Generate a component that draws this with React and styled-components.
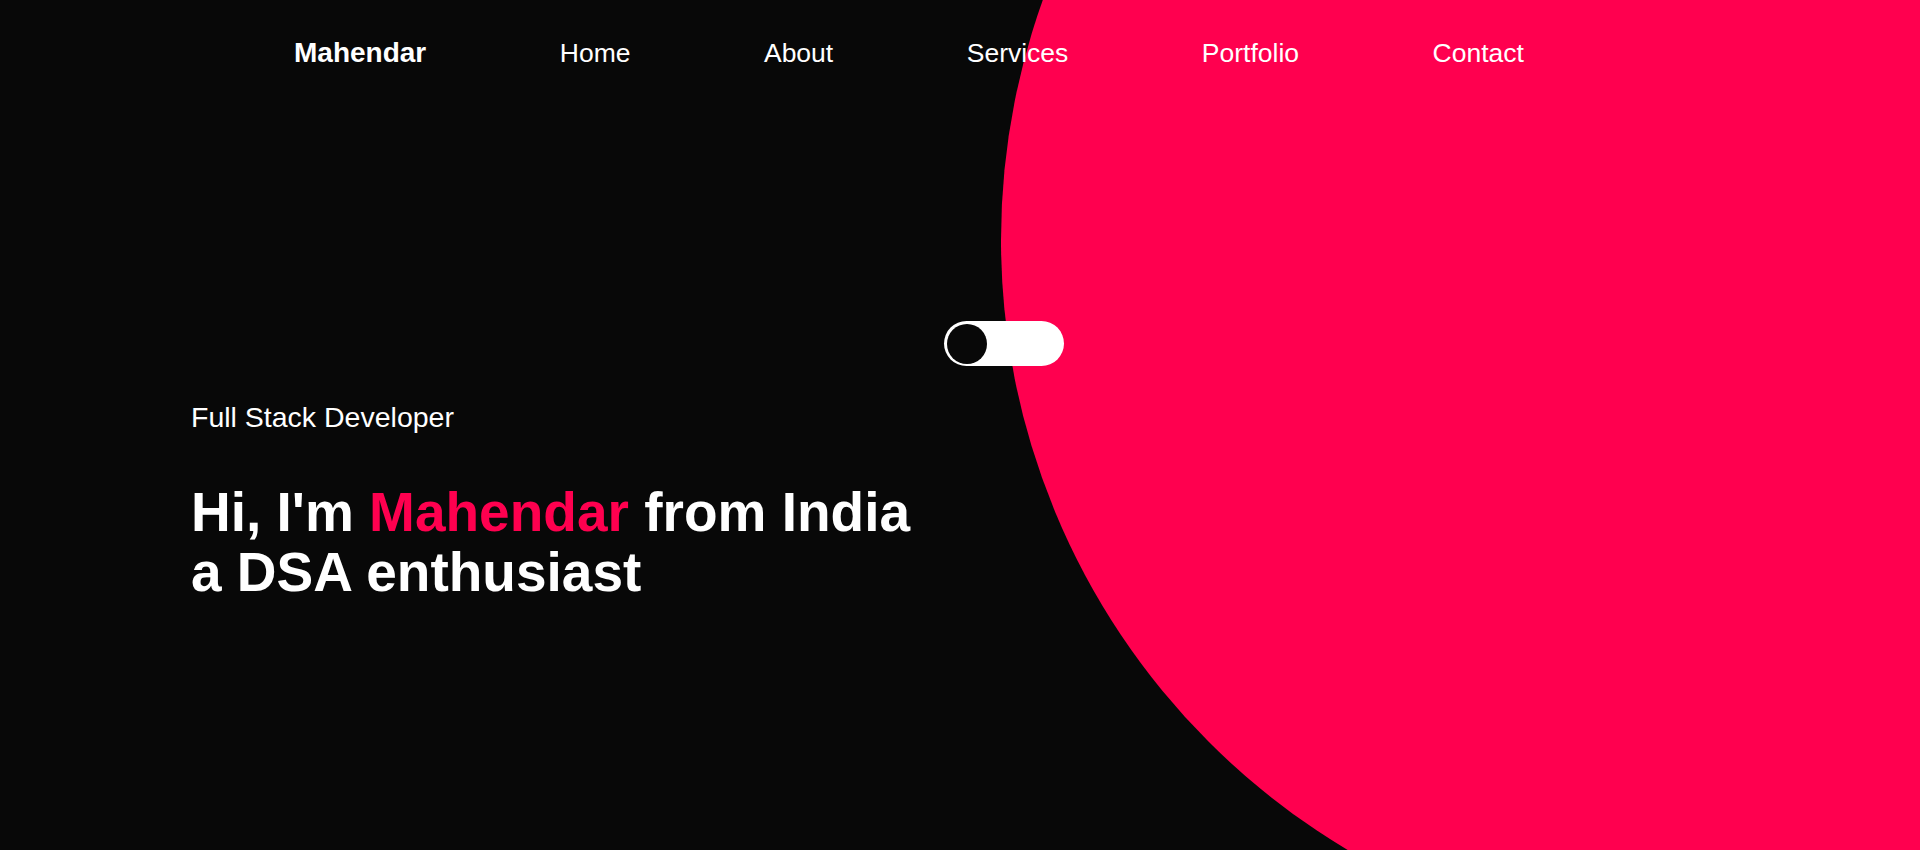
import React, { useState } from "react";
import styled, { createGlobalStyle } from "styled-components";

const PINK = "#ff004f";
const DARK = "#080808";

const GlobalStyle = createGlobalStyle`
  * { box-sizing: border-box; }
  html, body { margin: 0; padding: 0; }
  html { overflow-y: scroll; }
  body {
    background: ${DARK};
    color: #fff;
    font-family: "Liberation Sans", Arial, sans-serif;
    overflow-x: hidden;
  }
  ::-webkit-scrollbar { width: 15px; }
  ::-webkit-scrollbar-track { background: #ffffff; }
  ::-webkit-scrollbar-thumb {
    background: ${PINK};
    border-radius: 8px;
    border-left: 1px solid #ffffff;
  }
`;

const Page = styled.div`
  width: 100%;
  overflow: hidden;
`;

const Hero = styled.header`
  position: relative;
  height: 850px;
  overflow: hidden;
  background: ${DARK};
`;

const Circle = styled.div`
  position: absolute;
  left: 1001px;
  top: -470px;
  width: 1420px;
  height: 1420px;
  border-radius: 50%;
  background: ${PINK};
  z-index: 0;
`;

const Content = styled.div`
  position: relative;
  z-index: 1;
  display: flex;
  flex-direction: column;
`;

const Nav = styled.nav`
  display: flex;
  align-items: baseline;
  gap: 133.5px;
  padding: 37px 0 0 294px;
`;

const Logo = styled.a`
  font-size: 28px;
  font-weight: 700;
  color: #fff;
  text-decoration: none;
`;

const NavLink = styled.a`
  font-size: 26.5px;
  color: #fff;
  text-decoration: none;
`;

const ToggleRow = styled.div`
  display: flex;
  padding-left: 944px;
  margin-top: 252px;
`;

const Toggle = styled.button`
  width: 120px;
  height: 45px;
  border: none;
  border-radius: 23px;
  background: #fff;
  padding: 0 3px;
  display: flex;
  align-items: center;
  justify-content: ${(p) => (p.$on ? "flex-end" : "flex-start")};
  cursor: pointer;
`;

const Knob = styled.span`
  width: 40px;
  height: 40px;
  border-radius: 50%;
  background: ${DARK};
`;

const Intro = styled.div`
  display: flex;
  flex-direction: column;
  padding-left: 191px;
  margin-top: 35px;
`;

const Role = styled.p`
  margin: 0;
  font-size: 28.5px;
  color: #fff;
`;

const Headline = styled.h1`
  margin: 48px 0 0;
  font-size: 55px;
  line-height: 60px;
  font-weight: 700;
  color: #fff;
`;

const Accent = styled.span`
  color: ${PINK};
`;

const Section = styled.section`
  height: 975px;
  background: ${DARK};
`;

export default function App() {
  const [on, setOn] = useState(false);
  return (
    <>
      <GlobalStyle />
      <Page>
        <Hero id="home">
          <Circle />
          <Content>
            <Nav>
              <Logo href="#home">Mahendar</Logo>
              <NavLink href="#home">Home</NavLink>
              <NavLink href="#about">About</NavLink>
              <NavLink href="#services">Services</NavLink>
              <NavLink href="#portfolio">Portfolio</NavLink>
              <NavLink href="#contact">Contact</NavLink>
            </Nav>
            <ToggleRow>
              <Toggle $on={on} onClick={() => setOn(!on)} aria-label="Toggle theme">
                <Knob />
              </Toggle>
            </ToggleRow>
            <Intro>
              <Role>Full Stack Developer</Role>
              <Headline>
                Hi, I'm <Accent>Mahendar</Accent> from India
                <br />
                a DSA enthusiast
              </Headline>
            </Intro>
          </Content>
        </Hero>
        <Section id="about" />
        <Section id="services" />
        <Section id="portfolio" />
        <Section id="contact" />
      </Page>
    </>
  );
}
